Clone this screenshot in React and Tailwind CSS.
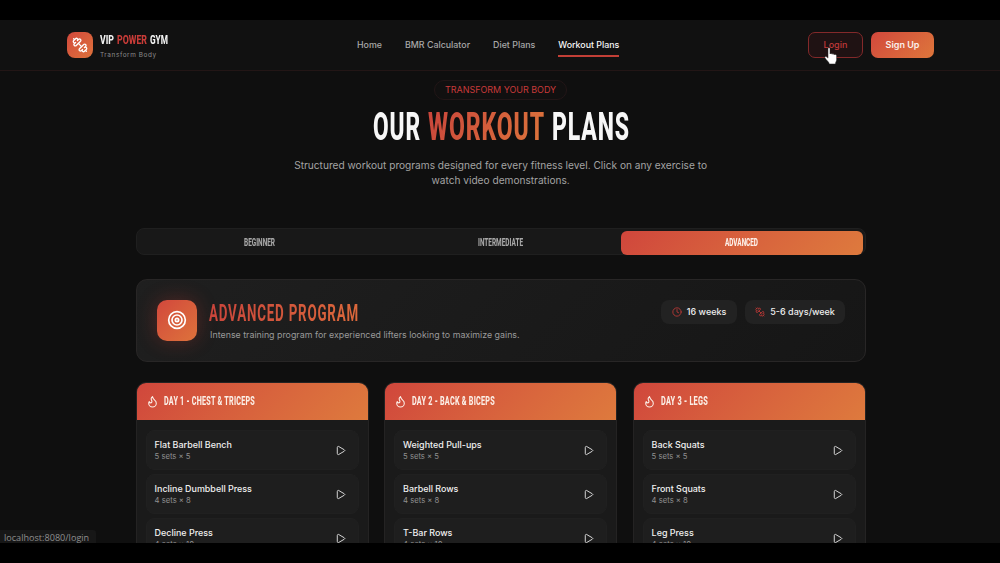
import React, { useLayoutEffect, useRef } from "react";
import { Clock, Flame, Play, Target } from "lucide-react";

const days = [
  {
    title: "DAY 1 - CHEST & TRICEPS",
    titleClass: "w-[91px]",
    exercises: [
      { name: "Flat Barbell Bench", sets: "5 sets × 5" },
      { name: "Incline Dumbbell Press", sets: "4 sets × 8" },
      { name: "Decline Press", sets: "4 sets × 10" },
    ],
  },
  {
    title: "DAY 2 - BACK & BICEPS",
    titleClass: "w-[83px]",
    exercises: [
      { name: "Weighted Pull-ups", sets: "5 sets × 5" },
      { name: "Barbell Rows", sets: "4 sets × 8" },
      { name: "T-Bar Rows", sets: "4 sets × 10" },
    ],
  },
  {
    title: "DAY 3 - LEGS",
    titleClass: "w-[47px]",
    exercises: [
      { name: "Back Squats", sets: "5 sets × 5" },
      { name: "Front Squats", sets: "4 sets × 8" },
      { name: "Leg Press", sets: "4 sets × 10" },
    ],
  },
];

// Display text, squeezed to the width of its box
const Display = ({ children, className = "", textClass = "" }) => {
  const box = useRef(null);
  const text = useRef(null);

  useLayoutEffect(() => {
    text.current.style.transform = "none";
    const scale = box.current.offsetWidth / text.current.getBoundingClientRect().width;
    text.current.style.transform = `scaleX(${scale})`;
  }, []);

  return (
    <span ref={box} className={`block shrink-0 whitespace-nowrap font-[Roboto,sans-serif] ${className}`}>
      <span ref={text} className={`inline-block origin-left ${textClass}`}>
        {children}
      </span>
    </span>
  );
};

const Dumbbell = ({ className }) => (
  <svg
    viewBox="0 0 24 24"
    fill="none"
    stroke="currentColor"
    strokeWidth="2"
    strokeLinecap="round"
    strokeLinejoin="round"
    className={className}
  >
    <path d="M14.4 14.4 9.6 9.6" />
    <path d="M18.657 21.485a2 2 0 1 1-2.829-2.828l-1.767 1.768a2 2 0 1 1-2.829-2.829l6.364-6.364a2 2 0 1 1 2.829 2.829l-1.768 1.767a2 2 0 1 1 2.828 2.829z" />
    <path d="m21.5 21.5-1.4-1.4" />
    <path d="M3.9 3.9 2.5 2.5" />
    <path d="M6.404 12.768a2 2 0 1 1-2.829-2.829l1.768-1.767a2 2 0 1 1-2.828-2.829l2.828-2.828a2 2 0 1 1 2.829 2.828l1.767-1.768a2 2 0 1 1 2.829 2.829z" />
  </svg>
);

const Navbar = () => (
  <nav className="flex h-[51px] items-center border-b border-[#231616] bg-[#111111] pl-[67px] pr-[66px]">
    <div className="flex w-[290px] items-center gap-[7px]">
      <div className="flex h-[26px] w-[26px] items-center justify-center rounded-[8px] bg-linear-135 from-[#d2473c] to-[#dd723b]">
        <Dumbbell className="h-[16px] w-[16px] text-white" />
      </div>
      <div className="flex flex-col">
        <div className="flex gap-[3px] text-[13.5px] font-extrabold leading-[16px] text-[#f2f2f2]">
          <Display className="w-[14px]">VIP</Display>
          <Display className="w-[30px] text-[#c93c38]">POWER</Display>
          <Display className="w-[18px]">GYM</Display>
        </div>
        <span className="mt-[3px] text-[6.4px] leading-[10px] tracking-[0.6px] text-[#8c8c8c]">Transform Body</span>
      </div>
    </div>

    <div className="flex gap-[23px] whitespace-nowrap text-[8.86px] font-medium leading-[14px] text-[#a8a8a8]">
      <a href="#">Home</a>
      <a href="#">BMR Calculator</a>
      <a href="#">Diet Plans</a>
      <a href="#" className="relative text-[#f7f7f7]">
        Workout Plans
        <span className="absolute -bottom-[5px] left-0 h-[2px] w-full bg-[#c23f36]" />
      </a>
    </div>

    <div className="ml-auto flex justify-end gap-2 text-[9px]">
      <button className="relative h-[26px] w-[55px] rounded-[7px] border border-[#83292a] bg-[#1f1213] font-medium text-[#c0393a]">
        Login
        {/* hand cursor */}
        <svg viewBox="0 0 14 19" className="absolute left-[15px] top-[14px] h-[19px] w-[14px]">
          <path
            d="M4 1.6c0-1.3 2-1.3 2 0V7c.3-.9 2-.7 2 .3.4-.8 2-.5 2 .5.5-.7 2.6-.4 2.600.8v4.200c0 1.600-1.200 2.300-1.200 4.200H5.300c-.4-2.300-2.900-3.700-4.400-6.200-.6-1.100.8-1.900 1.600-1l1.500 1.300z"
            fill="#fff"
            stroke="#222"
            strokeWidth=".5"
          />
        </svg>
      </button>
      <button className="h-[26px] w-[63px] rounded-[7px] bg-linear-135 from-[#d2473c] to-[#dd763b] font-semibold text-[#faf0ec]">
        Sign Up
      </button>
    </div>
  </nav>
);

const DayCard = ({ day }) => (
  <div className="h-[200px] overflow-hidden rounded-[10px] border border-[#242323] bg-[#1a1a1a]">
    <div className="-mx-px -mt-px flex h-[38px] items-center gap-[5px] bg-linear-135 from-[#d0463c] to-[#de7a3d] pl-[10px] text-[#fbeee6]">
      <Flame className="mt-[2px] h-[13px] w-[13px]" />
      <Display className={`text-[12.5px] font-extrabold leading-[16px] tracking-[0.4px] ${day.titleClass}`}>
        {day.title}
      </Display>
    </div>
    <div className="flex flex-col gap-1 px-[9px] pt-[10px]">
      {day.exercises.map((exercise) => (
        <div
          key={exercise.name}
          className="flex h-10 items-center justify-between rounded-[8px] border border-[#202020] bg-[#1e1e1e] pl-2 pr-[12px]"
        >
          <div className="pt-[2px]">
            <p className="text-[8.95px] font-medium leading-[12px] text-[#f0f0f0]">{exercise.name}</p>
            <p className="text-[7.68px] leading-[11px] text-[#8f8f8f]">{exercise.sets}</p>
          </div>
          <Play className="mt-px h-[11px] w-[11px] text-[#e6e6e6]" />
        </div>
      ))}
    </div>
  </div>
);

const App = () => {
  return (
    <div className="h-[563px] overflow-hidden bg-black py-5 font-[Inter,sans-serif]">
      <div className="relative h-[523px] overflow-hidden bg-[#0f0f0f]">
        <Navbar />

        <main className="ml-[135.6px] w-[730px]">
          {/* Heading */}
          <div className="flex flex-col items-center pt-[9px] text-center">
            <span className="flex h-[20px] w-[133px] items-center justify-center rounded-full border border-[#221617] bg-[#111010] text-[8.96px] leading-[12px] text-[#c93a3a]">
              TRANSFORM YOUR BODY
            </span>
            <h1 className="ml-[2px] mt-[4px] flex gap-[7px] text-[39px] font-extrabold leading-[46px] tracking-[1.5px] text-[#f7f7f7]">
              <Display className="w-[48px]">OUR</Display>
              <Display className="w-[117px]" textClass="bg-linear-135 from-[#c9433b] to-[#dd763b] bg-clip-text text-transparent">
                WORKOUT
              </Display>
              <Display className="w-[78px]">PLANS</Display>
            </h1>
            <p className="mt-[8px] w-[430px] text-[10.14px] leading-[15.4px] text-[#a3a3a3]">
              Structured workout programs designed for every fitness level. Click on any exercise to watch video
              demonstrations.
            </p>
          </div>

          {/* Level tabs */}
          <div className="mt-[39px] grid h-[27px] grid-cols-3 rounded-[8px] border border-[#1f1f1f] bg-[#181818] px-[2px] pt-[2px] text-[10.5px] font-extrabold leading-[14px] text-[#a8a8a8]">
            <button className="flex h-6 items-center justify-center">
              <Display className="w-[31px]">BEGINNER</Display>
            </button>
            <button className="flex h-6 items-center justify-center">
              <Display className="w-[45px]">INTERMEDIATE</Display>
            </button>
            <button className="flex h-6 items-center justify-center rounded-[6px] bg-linear-135 from-[#d0463c] to-[#de7a3d] text-[#fdf1ea]">
              <Display className="w-[33px]">ADVANCED</Display>
            </button>
          </div>

          {/* Program */}
          <section className="mt-[24px] flex h-[83px] rounded-[11px] border border-[#282626] bg-linear-135 from-[#1f1f1f] to-[#161616] pl-[20.5px] pr-[20px] pt-[20px]">
            <div className="flex h-[41px] w-[40px] shrink-0 items-center justify-center rounded-[10px] bg-linear-135 from-[#d2473c] to-[#dd723b] shadow-[0_0_20px_rgba(210,60,50,0.3)]">
              <Target className="h-5 w-5 text-white" />
            </div>
            <div className="ml-[12px]">
              <Display
                className="w-[150px] text-[24.5px] font-bold leading-[25px] tracking-[1.5px]"
                textClass="bg-linear-135 from-[#c9433b] to-[#dd6a3b] bg-clip-text text-transparent"
              >
                ADVANCED PROGRAM
              </Display>
              <p className="mt-[3px] whitespace-nowrap pl-px text-[8.86px] leading-[14px] text-[#999999]">
                Intense training program for experienced lifters looking to maximize gains.
              </p>
            </div>
            <div className="ml-auto flex gap-2 text-[9px] font-medium text-[#ededed]">
              <span className="flex h-[24px] w-[76px] items-center justify-center gap-[5px] rounded-[8px] bg-[#222222] pl-px">
                <Clock className="h-[10px] w-[10px] text-[#c23a37]" />
                16 weeks
              </span>
              <span className="flex h-[24px] w-[100px] items-center justify-center gap-[5px] rounded-[8px] bg-[#222222] pl-px">
                <Dumbbell className="h-[10px] w-[10px] text-[#c23a37]" />
                5-6 days/week
              </span>
            </div>
          </section>

          {/* Days */}
          <div className="mt-[20px] grid grid-cols-3 gap-[15.5px]">
            {days.map((day) => (
              <DayCard key={day.title} day={day} />
            ))}
          </div>
        </main>

        {/* Browser link preview */}
        <div className="absolute bottom-0 left-0 h-[13px] w-[96px] rounded-tr-[3px] bg-[#171717] pl-[4px] font-['Open_Sans',sans-serif] text-[9.1px] leading-[15px] text-[#8e8e8e]">
          localhost:8080/login
        </div>
      </div>
    </div>
  );
};

export default App;
